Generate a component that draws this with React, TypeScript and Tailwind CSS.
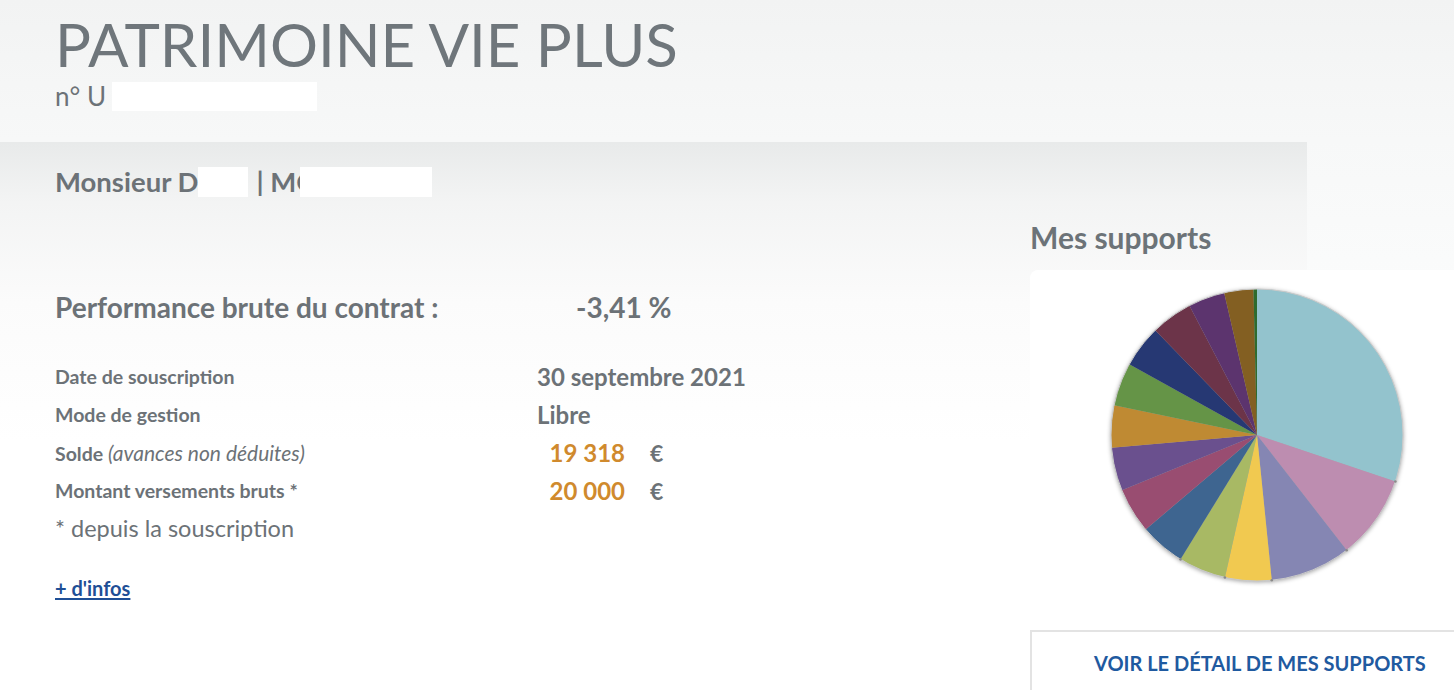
import React from "react";

type Slice = { end: number; color: string };

// end angles in degrees, clockwise from 12 o'clock
const slices: Slice[] = [
  { end: 108.6, color: "#93c3cd" },
  { end: 142.1, color: "#bd8db0" },
  { end: 174.2, color: "#8586b3" },
  { end: 192.7, color: "#f1c950" },
  { end: 211.6, color: "#a8b964" },
  { end: 229.7, color: "#3e6590" },
  { end: 247.8, color: "#994d71" },
  { end: 265, color: "#6a508e" },
  { end: 281.8, color: "#bf8a33" },
  { end: 299, color: "#659447" },
  { end: 315.8, color: "#263873" },
  { end: 332.4, color: "#6c3449" },
  { end: 347, color: "#5c346e" },
  { end: 358.6, color: "#835f22" },
  { end: 360, color: "#2e6b2e" },
];

const CX = 160;
const CY = 160;
const R = 146;

const point = (deg: number) => {
  const a = (deg * Math.PI) / 180;
  return [CX + R * Math.sin(a), CY - R * Math.cos(a)];
};

const PieChart = () => {
  let start = 0;
  return (
    <svg width="320" height="320" viewBox="0 0 320 320" className="drop-shadow-[0_1px_2px_rgba(0,0,0,0.35)]">
      {slices.map((s, i) => {
        const [x1, y1] = point(start);
        const [x2, y2] = point(s.end);
        const large = s.end - start > 180 ? 1 : 0;
        const d = `M${CX},${CY} L${x1},${y1} A${R},${R} 0 ${large} 1 ${x2},${y2} Z`;
        start = s.end;
        return <path key={i} d={d} fill={s.color} />;
      })}
      <circle cx={CX} cy={CY} r={R} fill="none" stroke="#c9c9c9" strokeWidth="1" />
      {[108.6, 142.1, 174.2, 192.7, 211.6].map((deg) => {
        const [x, y] = point(deg);
        return <circle key={deg} cx={x} cy={y} r="1.3" fill="#8a8a8a" />;
      })}
    </svg>
  );
};

const Row = ({ label, children }: { label: React.ReactNode; children: React.ReactNode }) => (
  <div className="flex h-[38px] items-center">
    <div className="w-[482px] text-[19.5px] font-bold text-[#6c7277]">{label}</div>
    <div className="flex items-center">{children}</div>
  </div>
);

const Amount = ({ value }: { value: string }) => (
  <>
    <span className="w-[88px] text-right text-[24px] font-bold text-[#d08a2d]">{value}</span>
    <span className="ml-[25px] text-[23px] font-bold text-[#6c7277]">€</span>
  </>
);

export default function App() {
  return (
    <div className="h-[690px] w-[1454px] overflow-hidden bg-[linear-gradient(to_bottom,#f2f3f3,#f7f8f8_140px,#fafbfb_260px,#ffffff_420px)] font-['Lato',sans-serif] text-[#6c7277]">
      <header className="h-[142px] pl-[55px] pt-[14px]">
        <h1 className="text-[60px] leading-[60px] font-normal text-[#6f767b]">PATRIMOINE VIE PLUS</h1>
        <div className="mt-[7px] flex items-center text-[26px] leading-[30px]">
          <span>n° U</span>
          <span className="ml-[6px] inline-block h-[29px] w-[205px] bg-white" />
        </div>
      </header>

      <div className="flex bg-[image:linear-gradient(to_bottom,#e8eaea,#f3f4f4_60px,#fbfbfb_160px,#ffffff_300px)] bg-[length:1307px_100%] bg-no-repeat">
        <section className="w-[1030px] pl-[55px] pt-[25px]">
          <div className="flex h-[30px] items-center text-[27.5px] font-bold text-[#6c7277]">
            <span>Monsieur D</span>
            <span className="inline-block h-[30px] w-[50px] bg-white" />
            <span className="ml-[8px]">| MC</span>
            <span className="ml-[-14px] inline-block h-[30px] w-[132px] bg-white" />
          </div>

          <div className="mt-[95px] flex h-[30px] items-center text-[28px] font-bold">
            <span className="w-[521px]">Performance brute du contrat :</span>
            <span>-3,41 %</span>
          </div>

          <div className="mt-[36px]">
            <Row label="Date de souscription">
              <span className="text-[24px] font-bold">30 septembre 2021</span>
            </Row>
            <Row label="Mode de gestion">
              <span className="text-[24px] font-bold">Libre</span>
            </Row>
            <Row
              label={
                <>
                  Solde <span className="text-[21px] font-normal italic">(avances non déduites)</span>
                </>
              }
            >
              <Amount value="19 318" />
            </Row>
            <Row label="Montant versements bruts *">
              <Amount value="20 000" />
            </Row>
            <div className="flex h-[38px] items-center text-[23.5px]">* depuis la souscription</div>
          </div>

          <a href="#" className="mt-[25px] inline-block text-[20px] font-bold text-[#1f4f96] underline underline-offset-2">
            + d'infos
          </a>
        </section>

        <aside className="w-[424px] pt-[77px]">
          <h2 className="text-[30px] leading-[36px] font-bold text-[#6c7378]">Mes supports</h2>
          <div className="mt-[15px] h-[325px] rounded-tl-lg bg-white pl-[67px] pt-[5px]">
            <PieChart />
          </div>
          <div className="mt-[35px] h-[70px] w-[460px] border-2 border-[#e3e3e3] bg-white pl-[62px] pt-[16px]">
            <span className="text-[20px] font-bold text-[#1f5aa0]">VOIR LE DÉTAIL DE MES SUPPORTS</span>
          </div>
        </aside>
      </div>
    </div>
  );
}
